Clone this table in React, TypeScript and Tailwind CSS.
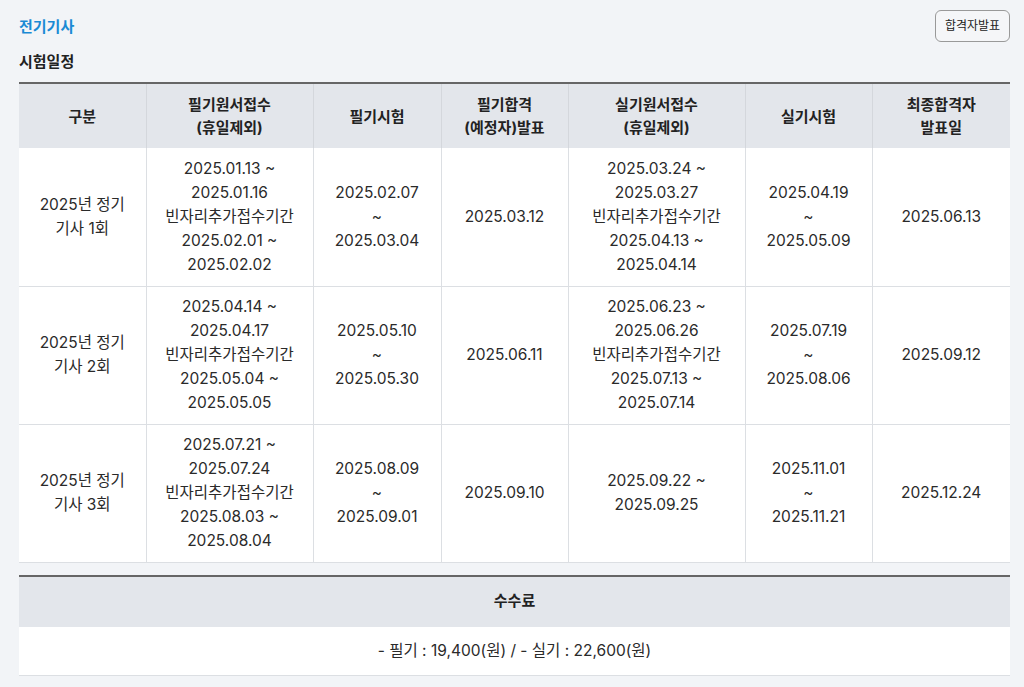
import React from "react";

const font = { fontFamily: 'Inter, "Noto Sans CJK KR", sans-serif' };

const headers = [
  ["구분"],
  ["필기원서접수", "(휴일제외)"],
  ["필기시험"],
  ["필기합격", "(예정자)발표"],
  ["실기원서접수", "(휴일제외)"],
  ["실기시험"],
  ["최종합격자", "발표일"],
];

const rows: string[][][] = [
  [
    ["2025년 정기", "기사 1회"],
    ["2025.01.13 ~", "2025.01.16", "빈자리추가접수기간", "2025.02.01 ~", "2025.02.02"],
    ["2025.02.07", "~", "2025.03.04"],
    ["2025.03.12"],
    ["2025.03.24 ~", "2025.03.27", "빈자리추가접수기간", "2025.04.13 ~", "2025.04.14"],
    ["2025.04.19", "~", "2025.05.09"],
    ["2025.06.13"],
  ],
  [
    ["2025년 정기", "기사 2회"],
    ["2025.04.14 ~", "2025.04.17", "빈자리추가접수기간", "2025.05.04 ~", "2025.05.05"],
    ["2025.05.10", "~", "2025.05.30"],
    ["2025.06.11"],
    ["2025.06.23 ~", "2025.06.26", "빈자리추가접수기간", "2025.07.13 ~", "2025.07.14"],
    ["2025.07.19", "~", "2025.08.06"],
    ["2025.09.12"],
  ],
  [
    ["2025년 정기", "기사 3회"],
    ["2025.07.21 ~", "2025.07.24", "빈자리추가접수기간", "2025.08.03 ~", "2025.08.04"],
    ["2025.08.09", "~", "2025.09.01"],
    ["2025.09.10"],
    ["2025.09.22 ~", "2025.09.25"],
    ["2025.11.01", "~", "2025.11.21"],
    ["2025.12.24"],
  ],
];

const widths = ["w-[127px]", "w-[167px]", "w-[128px]", "w-[127px]", "w-[177px]", "w-[127px]", "w-[138px]"];

export default function App() {
  return (
    <div className="min-h-screen bg-[#f2f4f7] text-[#2a2a2a]" style={font}>
      <div className="px-[19px] pt-[10px] w-[1029px]">
        <div className="flex items-start justify-between w-[991px]">
          <h1 className="text-[15px] font-bold text-[#1a8ad4] mt-[7px] leading-[20px]">전기기사</h1>
          <button className="h-[32px] w-[75px] text-[12px] border border-[#999] rounded-[6px] bg-[#f5f6f8] text-[#222]">
            합격자발표
          </button>
        </div>
        <h2 className="text-[15px] font-bold text-[#222] mt-[10px] leading-[20px]">시험일정</h2>

        <table className="mt-[10px] w-[991px] border-collapse table-fixed border-t-2 border-t-[#666] text-[15.5px]">
          <colgroup>
            {widths.map((w, i) => (
              <col key={i} className={w} />
            ))}
          </colgroup>
          <thead>
            <tr className="bg-[#e3e6eb] h-[65px]">
              {headers.map((h, i) => (
                <th
                  key={i}
                  className={`font-bold text-[15px] leading-[23px] text-[#222] ${i > 0 ? "border-l border-[#d4d7dc]" : ""}`}
                >
                  {h.map((l, j) => (
                    <div key={j}>{l}</div>
                  ))}
                </th>
              ))}
            </tr>
          </thead>
          <tbody>
            {rows.map((r, ri) => (
              <tr key={ri} className="bg-white h-[138px] border-b border-[#dcdfe3]">
                {r.map((c, ci) => (
                  <td
                    key={ci}
                    className={`text-center align-middle leading-[24px] ${ci > 0 ? "border-l border-[#dcdfe3]" : ""}`}
                  >
                    {c.map((l, j) => (
                      <div key={j}>{l}</div>
                    ))}
                  </td>
                ))}
              </tr>
            ))}
          </tbody>
        </table>

        <div className="mt-[12px] w-[991px] border-t-2 border-[#666]">
          <div className="bg-[#e3e6eb] h-[50px] flex items-center justify-center text-[15px] font-bold text-[#222]">
            수수료
          </div>
          <div className="bg-white h-[49px] flex items-center justify-center text-[15.5px] border-b border-[#dcdfe3]">
            - 필기 : 19,400(원) / - 실기 : 22,600(원)
          </div>
        </div>
      </div>
    </div>
  );
}
